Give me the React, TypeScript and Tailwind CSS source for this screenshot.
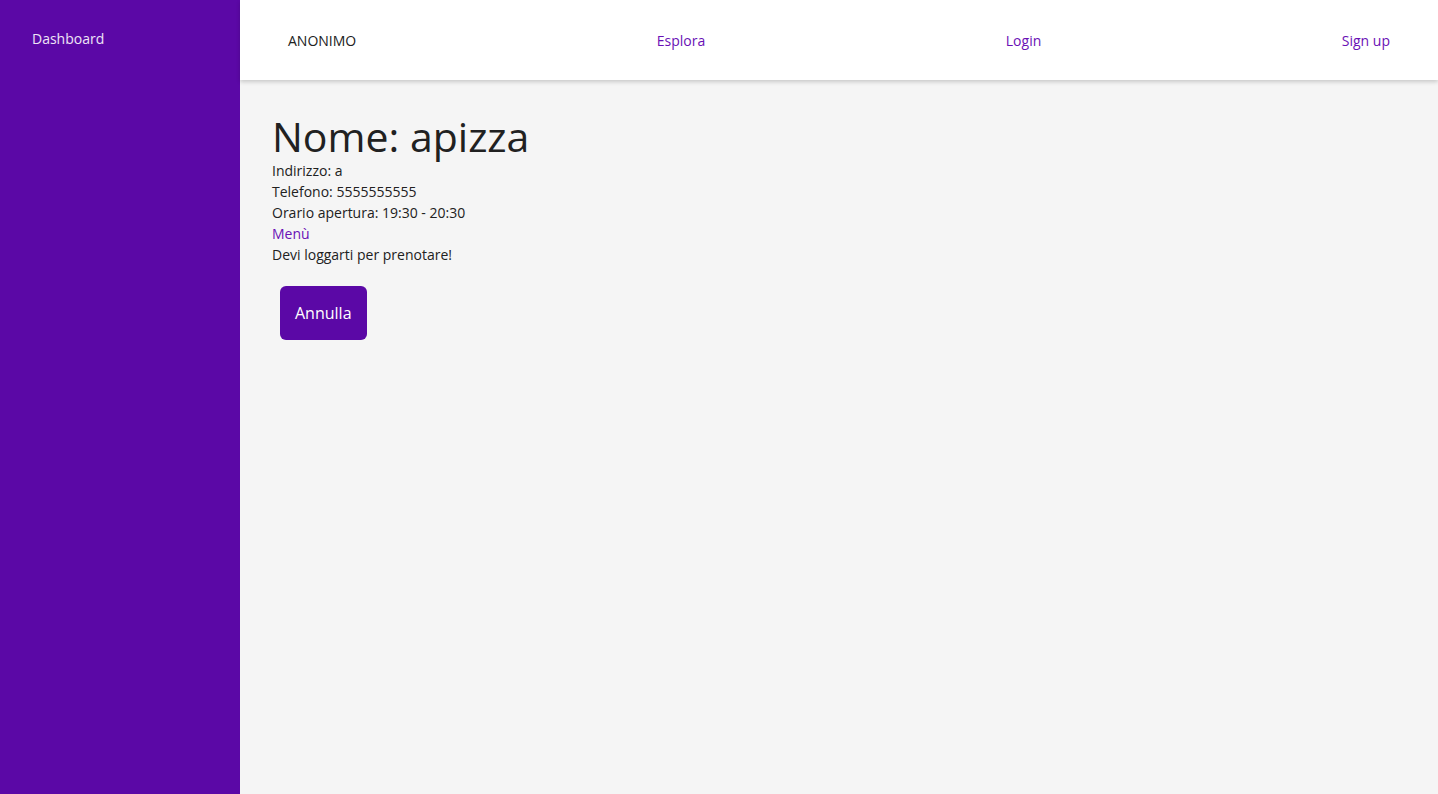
export default function App() {
  return (
    <div
      className="flex min-h-[794px] w-full bg-[#f5f5f5] text-[#212121]"
      style={{ fontFamily: '"Open Sans", sans-serif' }}
    >
      <aside className="w-[240px] shrink-0 bg-[#5b08a6]">
        <div className="px-8 pt-[28px] text-sm leading-[21px] text-white/90">Dashboard</div>
      </aside>

      <div className="flex flex-1 flex-col">
        <header className="flex h-20 items-center justify-between bg-white px-12 pt-[2px] text-sm shadow-[0_2px_4px_rgba(0,0,0,0.18)]">
          <span className="text-[#212121]">ANONIMO</span>
          <a className="text-[#6a11b5]">Esplora</a>
          <a className="text-[#6a11b5]">Login</a>
          <a className="text-[#6a11b5]">Sign up</a>
        </header>

        <main className="px-8 pt-8">
          <h1 className="text-[41px] leading-[48px] text-[#212121]">Nome: apizza</h1>
          <div className="text-sm leading-[21px]">
            <p>Indirizzo: a</p>
            <p>Telefono: 5555555555</p>
            <p>Orario apertura: 19:30 - 20:30</p>
            <a className="block text-[#6a11b5]">Menù</a>
            <p>Devi loggarti per prenotare!</p>
          </div>
          <button className="ml-2 mt-[21px] rounded-md bg-[#5b08a6] px-[15px] py-[15px] text-base leading-6 text-white">
            Annulla
          </button>
        </main>
      </div>
    </div>
  );
}
